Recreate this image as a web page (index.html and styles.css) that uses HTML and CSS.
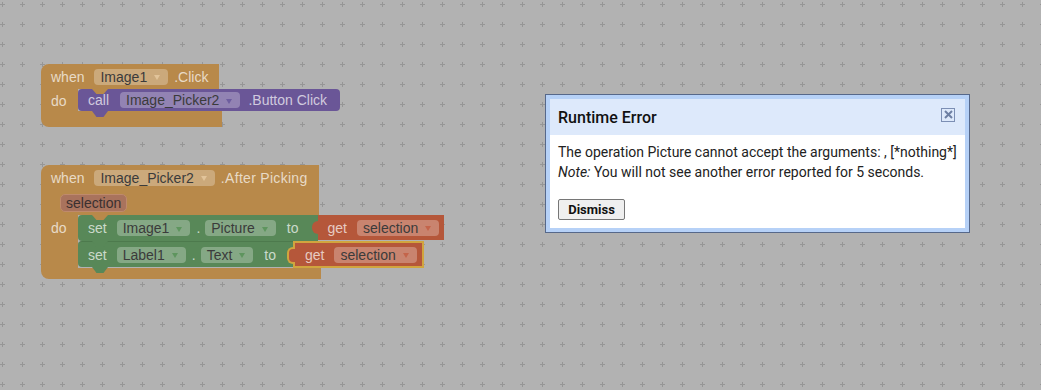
FILE: index.html
```html
<!doctype html>
<html lang="en">
    <head>
        <meta charset="UTF-8" />
        <title>Blocks - Runtime Error</title>
        <link rel="stylesheet" href="styles.css">
    </head>
    <body>
        <div class="workspace">
            <svg class="grid" width="1041" height="390">
                <defs>
                    <pattern id="dots" width="20" height="20" patternUnits="userSpaceOnUse">
                        <path d="M0 4.5h5M2.5 2v5" stroke="#969696" stroke-width="1" />
                    </pattern>
                </defs>
                <rect width="100%" height="100%" fill="url(#dots)" />
            </svg>

            <!-- when Image1.Click -->
            <div class="event ev1">
                <div class="ev-head">
                    <span class="lbl">when</span>
                    <span class="dd">Image1<i class="tri"></i></span>
                    <span class="lbl">.Click</span>
                </div>
                <div class="ev-body">
                    <div class="ev-spine"><span class="lbl">do</span></div>
                    <div class="stack">
                        <div class="stmt call first">
                            <span class="lbl">call</span>
                            <span class="dd">Image_Picker2<i class="tri"></i></span>
                            <span class="lbl">.Button Click</span>
                        </div>
                    </div>
                </div>
                <div class="ev-foot foot1"></div>
            </div>

            <!-- when Image_Picker2.AfterPicking -->
            <div class="event ev2">
                <div class="ev-head head2">
                    <div class="head-row">
                        <span class="lbl">when</span>
                        <span class="dd">Image_Picker2<i class="tri"></i></span>
                        <span class="lbl after">.After Picking</span>
                    </div>
                    <div class="param-row">
                        <span class="param">selection</span>
                    </div>
                </div>
                <div class="ev-body">
                    <div class="ev-spine spine2"><span class="lbl">do</span></div>
                    <div class="stack">
                        <div class="row">
                            <div class="stmt set first set1">
                                <span class="lbl">set</span>
                                <span class="dd">Image1<i class="tri"></i></span>
                                <span class="dot">.</span>
                                <span class="dd">Picture<i class="tri"></i></span>
                                <span class="lbl to">to</span>
                            </div>
                            <div class="get">
                                <span class="lbl">get</span>
                                <span class="dd">selection<i class="tri"></i></span>
                            </div>
                        </div>
                        <div class="row">
                            <div class="stmt set set2">
                                <span class="lbl">set</span>
                                <span class="dd">Label1<i class="tri"></i></span>
                                <span class="dot">.</span>
                                <span class="dd">Text<i class="tri"></i></span>
                                <span class="lbl to">to</span>
                            </div>
                            <div class="get selected">
                                <span class="lbl">get</span>
                                <span class="dd">selection<i class="tri"></i></span>
                            </div>
                        </div>
                    </div>
                </div>
                <div class="ev-foot foot2"></div>
            </div>

            <!-- error popup -->
            <div class="dialog">
                <div class="dialog-inner">
                    <div class="dialog-head">
                        <span class="dialog-title">Runtime Error</span>
                        <span class="close">
                            <svg width="11" height="11" viewBox="0 0 11 11">
                                <path d="M2 2L9 9M9 2L2 9" stroke="#6d7fa3" stroke-width="2" />
                            </svg>
                        </span>
                    </div>
                    <div class="dialog-body">
                        <div>The operation Picture cannot accept the arguments: , [*nothing*]</div>
                        <div><em>Note:</em> You will not see another error reported for 5 seconds.</div>
                        <button class="dismiss">Dismiss</button>
                    </div>
                </div>
            </div>
        </div>
    </body>
</html>
```
FILE: styles.css
```css
body {
    margin: 0;
    background-color: #b2b2b2;
    font-family: "Liberation Sans", Arial, sans-serif;
    overflow: hidden;
}

.workspace {
    position: relative;
    width: 1041px;
    height: 390px;
}

.grid {
    position: absolute;
    left: 0;
    top: 0;
}

/* blocks */

.event {
    position: absolute;
    display: flex;
    flex-direction: column;
    align-items: flex-start;
    font-size: 14px;
    line-height: 16px;
}

.ev1 {
    left: 41px;
    top: 64px;
}

.ev2 {
    left: 41px;
    top: 165px;
}

.lbl,
.dot {
    color: rgba(255, 255, 255, 0.7);
    white-space: nowrap;
}

.dd {
    display: flex;
    align-items: center;
    height: 16px;
    padding: 0 8px 0 6px;
    border-radius: 4px;
    background-color: rgba(255, 255, 255, 0.27);
    color: #3b3b3b;
    white-space: nowrap;
}

.tri {
    width: 0;
    height: 0;
    margin-left: 7px;
    margin-top: 2px;
    border-left: 3px solid transparent;
    border-right: 3px solid transparent;
    border-top: 5px solid var(--tri);
}

.lbl + .dd {
    margin-left: 4px;
}

.ev-head {
    display: flex;
    align-items: center;
    gap: 6px;
    height: 25px;
    box-sizing: border-box;
    padding: 0 11px 0 10px;
    background-color: #b8894a;
    border-radius: 8px 0 0 0;
    --tri: #e2c49a;
}

.head2 {
    flex-direction: column;
    align-items: flex-start;
    height: auto;
    gap: 0;
}

.head-row {
    display: flex;
    align-items: center;
    gap: 6px;
    height: 25px;
}

.after {
    letter-spacing: 0.3px;
}

.param-row {
    height: 25px;
    padding-left: 9px;
    display: flex;
    align-items: center;
}

.param {
    height: 16px;
    padding: 0 5px;
    border-radius: 5px;
    background-color: #a9735d;
    border: 1px solid #bf8a6c;
    color: #3b3030;
}

.ev-body {
    display: flex;
}

.ev-spine {
    width: 37px;
    box-sizing: border-box;
    padding: 4px 0 0 10px;
    background-color: #b8894a;
}

.spine2 {
    padding-top: 5px;
}

.ev-foot {
    height: 16px;
    background-color: #b8894a;
    border-radius: 0 0 0 8px;
}

.foot1 {
    width: 181px;
}

.foot2 {
    width: 280px;
    height: 11px;
}

.stack {
    display: flex;
    flex-direction: column;
    align-items: flex-start;
}

.stmt {
    position: relative;
    display: flex;
    align-items: center;
    gap: 6px;
    padding: 0 12px 0 10px;
    border-radius: 4px;
}

.stmt::after {
    content: "";
    position: absolute;
    left: 14px;
    bottom: -6px;
    width: 16px;
    height: 6px;
    background: inherit;
    clip-path: polygon(0 0, 100% 0, 72% 100%, 28% 100%);
    z-index: 1;
}

.stmt.first::before {
    content: "";
    position: absolute;
    left: 14px;
    top: 0;
    width: 16px;
    height: 5px;
    background-color: #b8894a;
    clip-path: polygon(0 0, 100% 0, 72% 100%, 28% 100%);
}

.call {
    height: 22px;
    background-color: #6a5697;
    --tri: #6e5e9f;
    padding-right: 13px;
}

.call .lbl + .dd {
    margin-left: 5px;
}

.call .dd + .lbl {
    margin-left: 2px;
}

.row {
    display: flex;
    align-items: flex-start;
}

.set {
    height: 26px;
    box-sizing: border-box;
    background-color: #588858;
    --tri: #5e955e;
    border-radius: 4px 0 0 4px;
}

.set2 {
    border-top: 1px solid #4d7a4d;
    padding-right: 17px;
}

.set1 {
    padding-right: 19px;
}

.set .dot + .dd {
    margin-left: -1px;
}

.set .to {
    margin-left: 5px;
}

.get {
    position: relative;
    display: flex;
    align-items: center;
    gap: 6px;
    height: 25px;
    box-sizing: border-box;
    padding: 0 5px 0 10px;
    background-color: #b5573a;
    --tri: #c4644a;
    z-index: 2;
}

.get::before {
    content: "";
    position: absolute;
    left: -6px;
    top: 6px;
    width: 6px;
    height: 13px;
    background: inherit;
    border-radius: 6px 0 0 6px;
}

.get.selected {
    height: 27px;
    padding-left: 10px;
    border: 2px solid #d1a53e;
}

.get.selected::before {
    left: -8px;
    top: 4px;
    border: 2px solid #d1a53e;
    border-right: none;
}

/* dialog */

.dialog {
    position: absolute;
    left: 545px;
    top: 94px;
    width: 425px;
    height: 139px;
    box-sizing: border-box;
    padding: 4px;
    border: 1px solid #56688a;
    background-color: #b6d1f7;
    font-family: Roboto, "Liberation Sans", sans-serif;
    color: #222;
    z-index: 5;
}

.dialog-inner {
    height: 100%;
    display: flex;
    flex-direction: column;
    background-color: white;
}

.dialog-head {
    height: 36px;
    display: flex;
    align-items: center;
    justify-content: space-between;
    padding: 0 10px 0 8px;
    background-color: #dde9fb;
}

.dialog-title {
    font-size: 16px;
    font-weight: 500;
    color: #111;
    margin-top: 1px;
}

.close {
    display: flex;
    align-items: center;
    justify-content: center;
    width: 12px;
    height: 12px;
    border: 1px solid #7c8fb4;
    margin-top: -5px;
}

.dialog-body {
    padding: 7px 8px 0 8px;
    font-size: 14px;
    line-height: 20px;
}

.dismiss {
    margin-top: 17px;
    width: 67px;
    height: 21px;
    padding: 0;
    font-family: Roboto, "Liberation Sans", sans-serif;
    font-size: 13px;
    font-weight: bold;
    color: #111;
    background-color: #efefef;
    border: 1px solid #767676;
    border-radius: 2px;
}
```
